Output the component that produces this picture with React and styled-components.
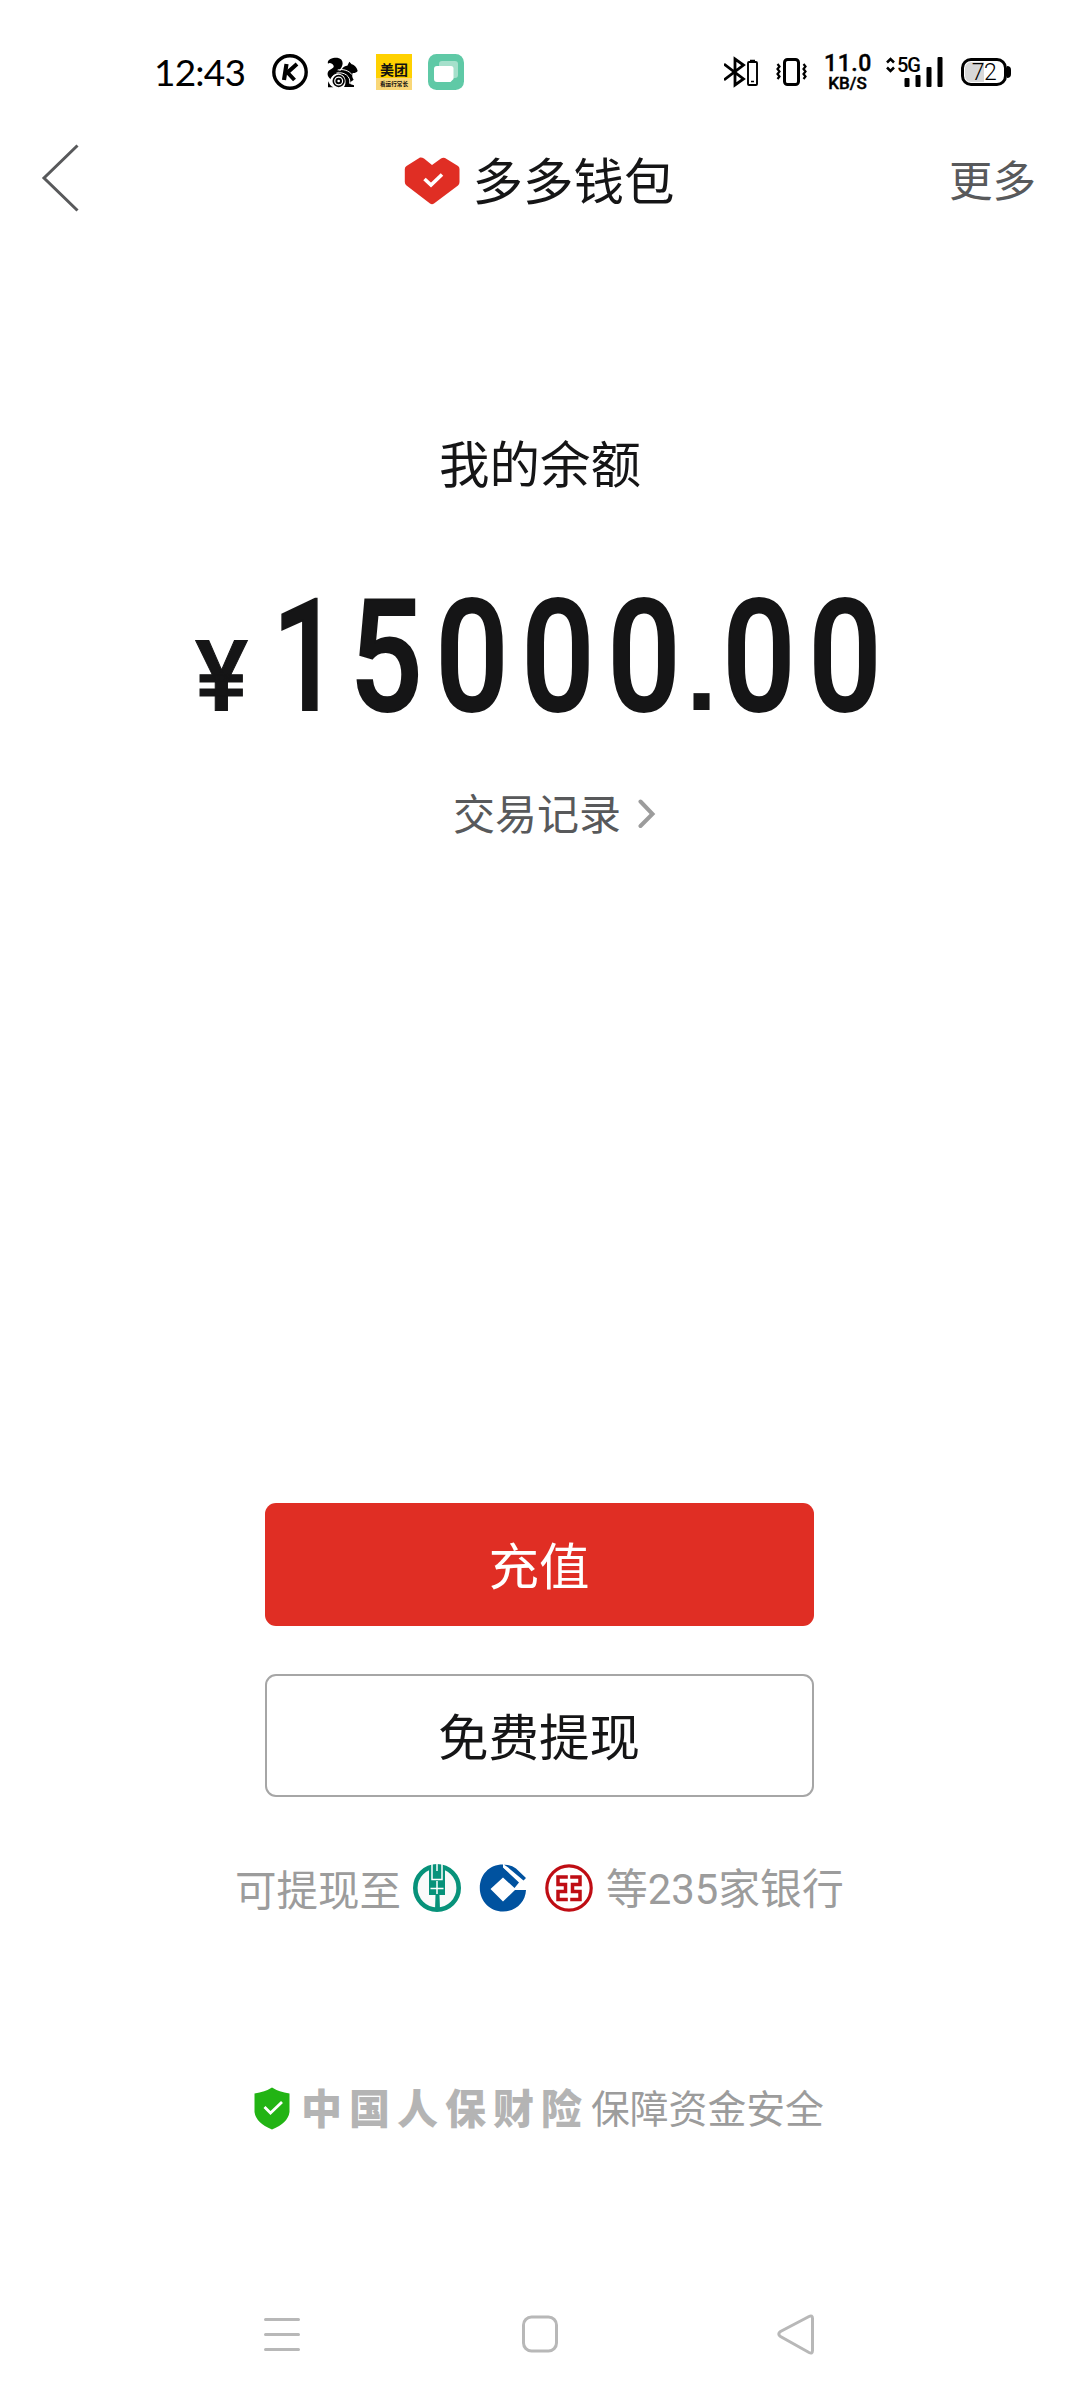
import React from "react";
import styled, { createGlobalStyle } from "styled-components";

const Global = createGlobalStyle`
  * { box-sizing: border-box; }
  body { margin: 0; background: #fff; }
  button { font: inherit; padding: 0; cursor: pointer; }
  svg { display: block; flex: none; }
`;

const cjk = `"Noto Sans CJK SC", sans-serif`;

const Screen = styled.div`
  width: 1080px;
  height: 2400px;
  display: flex;
  flex-direction: column;
  background: #fff;
  color: #151516;
  font-family: ${cjk};
  overflow: hidden;
`;

const StatusBar = styled.div`
  height: 90px;
  padding: 54px 69px 0 154px;
  display: flex;
  justify-content: space-between;
  color: #000;
`;

const StatusGroup = styled.div`
  display: flex;
  align-items: flex-start;
`;

const Clock = styled.div`
  width: 118px;
  font: 400 37px/35px Lato, sans-serif;
  letter-spacing: -0.8px;
`;

const Gap = styled.div`
  flex: none;
  width: ${(p) => p.$w}px;
`;

const MeituanBadge = styled.div`
  width: 36px;
  height: 36px;
  background: linear-gradient(#ffd100 0 24px, #f9d777 24px 36px);
  color: #111;
  display: flex;
  flex-direction: column;
  align-items: center;
  font-family: ${cjk};
`;

const MeituanName = styled.div`
  font-size: 14px;
  line-height: 16px;
  font-weight: 700;
  margin-top: 7px;
`;

const MeituanTag = styled.div`
  font-size: 5.6px;
  line-height: 8px;
  font-weight: 700;
  margin-top: 3px;
`;

const Speed = styled.div`
  width: 50px;
  height: 36px;
  display: flex;
  flex-direction: column;
  align-items: center;
  font-family: Roboto, sans-serif;
  font-weight: 500;
  -webkit-text-stroke: 0.4px #000;
`;

const SpeedValue = styled.div`
  font-size: 23px;
  line-height: 19px;
  letter-spacing: 0.6px;
  margin-left: -2px;
`;

const SpeedUnit = styled.div`
  font-size: 17px;
  line-height: 18px;
  margin: 1px 0 0 -3px;
`;

const Signal = styled.div`
  width: 60px;
  height: 36px;
  display: grid;

  > * { grid-area: 1 / 1; }
`;

const NetworkType = styled.div`
  font: 500 20px/20px Roboto, sans-serif;
  letter-spacing: -1px;
  padding: 1px 0 0 12px;
`;

const Battery = styled.div`
  width: 46px;
  height: 28px;
  margin-top: 4px;
  border: 3px solid #000;
  border-radius: 10px;
  padding: 1px;
`;

const BatteryLevel = styled.div`
  height: 20px;
  border-radius: 6px;
  background: linear-gradient(90deg, #d8d8d8 50%, #fff 50%);
  font: 300 23px/21px Roboto, sans-serif;
  text-align: center;
  letter-spacing: -0.4px;
`;

const BatteryNub = styled.div`
  width: 4px;
  height: 12px;
  margin-top: 12px;
  background: #000;
  border-radius: 0 4px 4px 0;
`;

const Header = styled.header`
  height: 176px;
  padding: 0 44px 0 41px;
  display: grid;
  grid-template-columns: 1fr auto 1fr;
  align-items: center;
`;

const HeaderTitle = styled.h1`
  margin: 0;
  display: flex;
  align-items: center;
  gap: 13px;
  font-weight: 400;

  > svg { margin: 7px 0 0 1px; }
`;

const Label = styled.span`
  font-size: ${(p) => p.$size}px;
  line-height: ${(p) => p.$size * 1.4}px;
  color: ${(p) => p.$color || "#151516"};
  white-space: nowrap;
`;

const Count = styled.span`
  font-family: Roboto, sans-serif;
`;

const More = styled.div`
  justify-self: end;
  display: flex;
  padding-top: 2px;
`;

const Balance = styled.section`
  height: 1237px;
  padding-top: 160px;
  display: flex;
  flex-direction: column;
  align-items: center;
`;

const Amount = styled.div`
  width: 1080px;
  height: 160px;
  margin-top: 80px;
  padding-left: 195px;
  display: flex;
  align-items: baseline;
  font-family: Roboto, sans-serif;
  font-weight: 500;
  line-height: 160px;
  white-space: nowrap;
`;

const Currency = styled.span`
  width: 74px;
  font-size: 98px;
  -webkit-text-stroke: 1px #151516;

  > span {
    display: inline-block;
    transform: scaleX(1.02);
    transform-origin: 0 0;
  }
`;

const Digit = styled.span`
  width: ${(p) => (p.$narrow ? 74 : 86)}px;
  font-size: 156.5px;
  display: flex;
  justify-content: center;
  transform: scaleX(${(p) => (p.$narrow ? 0.76 : 0.82)});
  -webkit-text-stroke: 2px #151516;
`;

const Point = styled.span`
  width: 29px;
  display: flex;
  justify-content: center;
  font-family: "Liberation Sans", sans-serif;
  font-weight: 700;
  font-size: 114px;
`;

const Records = styled.a`
  margin: 46px 0 0 29px;
  display: flex;
  align-items: center;
  gap: 17px;

  > svg { margin-top: 3px; }
`;

const Actions = styled.section`
  padding-left: 265px;
  display: flex;
  flex-direction: column;
  gap: 48px;
`;

const ActionButton = styled.button`
  width: 549px;
  height: 123px;
  border-radius: 11px;
  border: ${(p) => (p.$primary ? "0" : "2px solid #a6a6a6")};
  background: ${(p) => (p.$primary ? "#e02e24" : "#fff")};
  display: flex;
  align-items: center;
  justify-content: center;
  padding: 0 1px 2px 0;
`;

const Banks = styled.div`
  height: 60px;
  margin-top: 61px;
  padding-left: 235px;
  display: flex;
  align-items: center;
`;

const BankIcons = styled.div`
  display: flex;
  gap: 18px;
  margin: 0 13px 1px 12px;
`;

const Guarantee = styled.div`
  height: 60px;
  margin-top: 158px;
  padding-left: 254px;
  display: flex;
  align-items: center;

  > svg { margin-top: 4px; }
`;

const Insurer = styled.span`
  width: 282px;
  margin: 0 8px 0 11px;
  font-size: 41px;
  line-height: 56px;
  font-weight: 900;
  letter-spacing: 7px;
  color: #b4b4b4;
  white-space: nowrap;
`;

const NavBar = styled.nav`
  margin-top: auto;
  height: 86px;
  padding: 0 265px 0 264px;
  display: flex;
  justify-content: space-between;
  align-items: flex-start;
`;

const NavKey = styled.div`
  margin-left: ${(p) => p.$shift || 0}px;
`;

const KIcon = () => (
  <svg width="36" height="36" viewBox="0 0 36 36" fill="none" stroke="#000">
    <circle cx="18" cy="18" r="16.2" strokeWidth="3.4" />
    <path d="M14.5 10 12 26" strokeWidth="4.2" />
    <path d="M25 10 15.5 18.5 22.5 26" strokeWidth="4" />
  </svg>
);

const SquirrelIcon = () => (
  <svg width="31" height="31" viewBox="560 50 93 93" style={{ marginTop: 3 }}>
    <path d="M563 70C559 58 575 51 591 52C605 54 611 66 604 80L595 94C586 97 575 104 570 116C558 106 559 92 573 86C582 82 582 76 576 71C571 68 566 67 563 70Z" />
    <path d="M600 91C607 83 612 75 621 76L627 64L634 72C642 73 650 82 652 92C648 97 642 99 637 98C634 107 636 113 640 118L634 123C629 125 628 129 631 132L641 135V140H611C619 129 618 107 600 101C588 96 573 105 569 119C570 106 582 97 600 91Z" />
    <path d="M589 98C611 94 632 107 628 130" fill="none" stroke="#fff" strokeWidth="3" />
    <path d="M592 89C609 85 626 91 635 103" fill="none" stroke="#fff" strokeWidth="3" />
    <path d="M565 123C567 133 571 138 579 141H563V130Z" />
    <circle cx="595" cy="122" r="16" fill="#fff" stroke="#000" strokeWidth="5" />
    <circle cx="595" cy="122" r="7" fill="#fff" stroke="#000" strokeWidth="6" />
  </svg>
);

const CardsIcon = () => (
  <svg width="36" height="36" viewBox="0 0 36 36">
    <rect width="36" height="36" rx="8.5" fill="#5fc9a6" />
    <path d="M14 7h13q3 0 3 3v11q0 3-3 3H11V10q0-3 3-3Z" fill="#a5e0cb" />
    <path d="M9 12h14q2.500 0 2.500 2.500V25l-3 3H9q-3 0-3-3V15q0-3 3-3Z" fill="#fff" />
  </svg>
);

const BluetoothIcon = () => (
  <svg width="36" height="36" viewBox="0 0 36 36" fill="none" stroke="#000">
    <path d="M0 10 19.500 25 11 31V5L19.500 11 0 26" strokeWidth="2.800" />
    <rect x="24" y="8" width="9" height="23" rx="1" strokeWidth="1.900" />
    <path d="M26 6.500h5M27 27.500h3" strokeWidth="1.700" />
  </svg>
);

const VibrateIcon = () => (
  <svg width="32" height="36" viewBox="0 0 32 36" fill="none" stroke="#000">
    <rect x="8.500" y="5.500" width="14" height="25" rx="3" strokeWidth="3" />
    <path d="M1.500 10 3.500 12.500 1.500 15 3.500 17.500 1.500 20 3.500 22.500 1.500 25M27.500 10 29.500 12.500 27.500 15 29.500 17.500 27.500 20 29.500 22.500 27.500 25" strokeWidth="2.200" />
  </svg>
);

const SignalIcon = () => (
  <svg width="60" height="36" viewBox="0 0 60 36">
    <path d="M2 8.500 5.500 5 9 8.500M2 13.500 5.500 17 9 13.500" fill="none" stroke="#000" strokeWidth="2.500" />
    <rect x="19.500" y="24" width="5" height="9" rx="1" />
    <rect x="30.500" y="21" width="5" height="12" rx="1" />
    <rect x="41.500" y="13" width="5" height="20" rx="1" />
    <rect x="52.500" y="3" width="5" height="30" rx="1" />
  </svg>
);

const BackIcon = () => (
  <svg width="38" height="68" viewBox="0 0 38 68" fill="none" stroke="#58595b" strokeWidth="3">
    <path d="M36.500 1.500 3 34 36.500 66.500" />
  </svg>
);

const HeartIcon = () => (
  <svg width="56" height="48" viewBox="0 0 56 48">
    <path d="M16 .6Q18 .2 20 1.600L28 8 37 1.500Q39 .2 41 1L54 9Q55.500 10 55.500 12V25Q55.500 27 54 28.500L30 46.500Q28 48 26 46.500L2.500 28.500Q.8 27 .8 25V12Q.8 10 2.500 9Z" fill="#e02e24" />
    <path d="M20.500 22 27 28 38 17.500" fill="none" stroke="#fff" strokeWidth="3.600" />
  </svg>
);

const RecordsArrow = () => (
  <svg width="18" height="32" viewBox="0 0 18 32" fill="none" stroke="#9c9c9c" strokeWidth="4" strokeLinecap="round">
    <path d="M2.500 3.500 14.500 16 2.500 28" />
  </svg>
);

const AgriculturalBank = () => (
  <svg width="48" height="48" viewBox="0 0 48 48">
    <circle cx="24" cy="24" r="21.700" fill="#fafafa" stroke="#07927a" strokeWidth="4.600" />
    <path d="M16 2h16v29h-5.500l.500 15h-5l.500-15h-6.500Z" fill="#07927a" />
    <path d="M19 0v15.500h10V0M24 0v7M24 17v13M17.500 24.500h13" fill="none" stroke="#fff" strokeWidth="1.500" />
  </svg>
);

const ConstructionBank = () => (
  <svg width="48" height="48" viewBox="0 0 48 48">
    <path d="M24 .5C10 .5 .8 11 .8 24S11 47.500 24 47.500C37 47.500 46.500 38 47 26H36L24 37.500 11.500 25 24 13.500 35.500 24 40 18.500 24 3.500Z" fill="#00529f" />
    <path d="M25 .8Q32 .5 37 4.500L47 14 44.500 16.500 28.500 3Z" fill="#00529f" />
    <path d="M25 3 43 18.500" stroke="#fff" strokeWidth="1.600" />
  </svg>
);

const IndustrialBank = () => (
  <svg width="48" height="48" viewBox="0 0 48 48" fill="none" stroke="#bf0d14">
    <circle cx="24" cy="24" r="22.200" strokeWidth="3.200" />
    <path d="M22.800 13H13V20.500H20.500V27.500H13V35.500H22.800M25.200 13H35V20.500H27.500V27.500H35V35.500H25.200" strokeWidth="3.500" />
  </svg>
);

const ShieldIcon = () => (
  <svg width="36" height="43" viewBox="0 0 36 43">
    <path d="M18 .5Q25 5 35.500 6.500V25Q34 36 18 42.500Q2 36 .5 25V6.500Q11 5 18 .5Z" fill="#22b414" />
    <path d="M10.500 20 16.500 26 28 15" fill="none" stroke="#fff" strokeWidth="2.800" />
  </svg>
);

const MenuIcon = () => (
  <svg width="36" height="40" viewBox="0 0 36 40" stroke="#b8b8b8" strokeWidth="3" strokeLinecap="round">
    <path d="M1.500 5.500h33M1.500 20.500h33M1.500 35.500h33" />
  </svg>
);

const HomeIcon = () => (
  <svg width="36" height="40" viewBox="0 0 36 40" fill="none" stroke="#b8b8b8" strokeWidth="3">
    <rect x="1.500" y="3" width="33" height="34" rx="8" />
  </svg>
);

const NavBackIcon = () => (
  <svg width="38" height="42" viewBox="0 0 38 42" fill="none" stroke="#b8b8b8" strokeWidth="3">
    <path d="M32 2.500Q35.500.8 35.500 4.500V36.500Q35.500 40.200 32 38.500L3.500 22.500Q0 20 3.500 17.500Z" />
  </svg>
);

export default function App() {
  return (
    <Screen>
      <Global />
      <StatusBar>
        <StatusGroup>
          <Clock>12:43</Clock>
          <KIcon />
          <Gap $w={19} />
          <SquirrelIcon />
          <Gap $w={18} />
          <MeituanBadge>
            <MeituanName>美团</MeituanName>
            <MeituanTag>看运行常长</MeituanTag>
          </MeituanBadge>
          <Gap $w={16} />
          <CardsIcon />
        </StatusGroup>
        <StatusGroup>
          <BluetoothIcon />
          <Gap $w={16} />
          <VibrateIcon />
          <Gap $w={16} />
          <Speed>
            <SpeedValue>11.0</SpeedValue>
            <SpeedUnit>KB/S</SpeedUnit>
          </Speed>
          <Gap $w={11} />
          <Signal>
            <SignalIcon />
            <NetworkType>5G</NetworkType>
          </Signal>
          <Gap $w={16} />
          <Battery>
            <BatteryLevel>72</BatteryLevel>
          </Battery>
          <BatteryNub />
        </StatusGroup>
      </StatusBar>

      <Header>
        <BackIcon />
        <HeaderTitle>
          <HeartIcon />
          <Label $size={50.500}>多多钱包</Label>
        </HeaderTitle>
        <More>
          <Label $size={43.500} $color="#58595b">更多</Label>
        </More>
      </Header>

      <Balance>
        <Label $size={50.500}>我的余额</Label>
        <Amount>
          <Currency><span>¥</span></Currency>
          {[..."15000.00"].map((c, i) =>
            c === "." ? (
              <Point key={i}>{c}</Point>
            ) : (
              <Digit key={i} $narrow={c === "1"}>{c}</Digit>
            )
          )}
        </Amount>
        <Records>
          <Label $size={42} $color="#58595b">交易记录</Label>
          <RecordsArrow />
        </Records>
      </Balance>

      <Actions>
        <ActionButton $primary>
          <Label $size={50.500} $color="#fff">充值</Label>
        </ActionButton>
        <ActionButton>
          <Label $size={50.500}>免费提现</Label>
        </ActionButton>
      </Actions>

      <Banks>
        <Label $size={41.500} $color="#9c9c9c">可提现至</Label>
        <BankIcons>
          <AgriculturalBank />
          <ConstructionBank />
          <IndustrialBank />
        </BankIcons>
        <Label $size={41.800} $color="#9c9c9c">
          等<Count>235</Count>家银行
        </Label>
      </Banks>

      <Guarantee>
        <ShieldIcon />
        <Insurer>中国人保财险</Insurer>
        <Label $size={38.800} $color="#9c9c9c">保障资金安全</Label>
      </Guarantee>

      <NavBar>
        <NavKey><MenuIcon /></NavKey>
        <NavKey $shift={3}><HomeIcon /></NavKey>
        <NavKey><NavBackIcon /></NavKey>
      </NavBar>
    </Screen>
  );
}
